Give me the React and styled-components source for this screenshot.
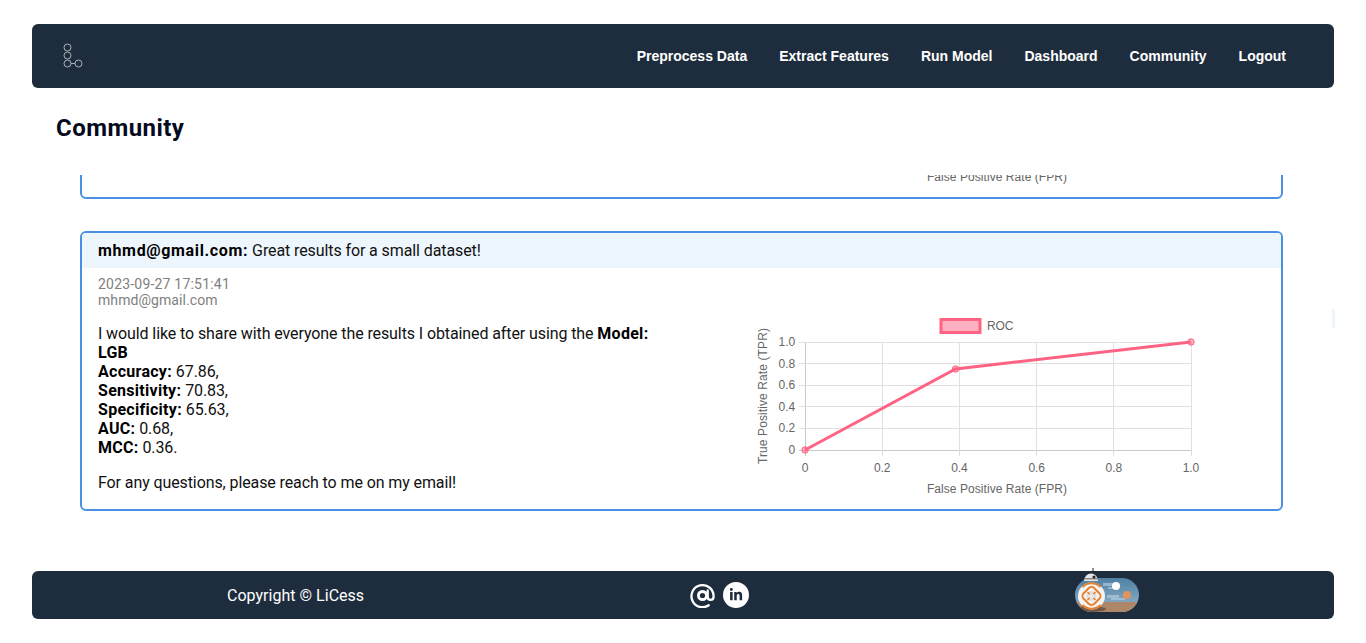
import React from "react"
import styled, { createGlobalStyle } from "styled-components"
import { FaLinkedinIn } from "react-icons/fa"

const GlobalStyle = createGlobalStyle`
  html, body {
    margin: 0;
    background: #fff;
    font-family: Roboto, "Liberation Sans", sans-serif;
  }
`

const Page = styled.div`
  box-sizing: border-box;
  height: 643px;
  padding: 24px 32px;
  display: flex;
  flex-direction: column;
  overflow: hidden;
`

const Header = styled.header`
  height: 64px;
  flex: none;
  background: #1e2d3d;
  border-radius: 6px;
  display: flex;
  align-items: center;
  justify-content: space-between;
  padding: 0 48px 0 28px;
`

const Nav = styled.nav`
  display: flex;
  gap: 32px;
`

const NavLink = styled.a`
  color: #fff;
  font-family: "Liberation Sans", Arial, sans-serif;
  font-weight: 700;
  font-size: 14px;
  text-decoration: none;
`

const Title = styled.h1`
  margin: 26px 0 0 24px;
  height: 61px;
  flex: none;
  font-size: 24px;
  line-height: 28px;
  font-weight: 700;
  letter-spacing: 0.45px;
  color: #050a1e;
`

const Feed = styled.main`
  margin-left: 48px;
  width: 1203px;
  height: 336px;
  flex: none;
  display: flex;
  flex-direction: column;
  justify-content: flex-end;
  gap: 32px;
  overflow: hidden;
`

const Card = styled.article`
  flex: none;
  border: 2px solid #4a90e2;
  border-radius: 6px;
  overflow: hidden;
`

const CardHead = styled.div`
  padding: 8px 16px;
  background: #eef6fd;
  font-size: 16px;
  letter-spacing: -0.1px;
  color: #111;
`

const CardBody = styled.div`
  padding: 8px 16px 9px;
  font-size: 16px;
  letter-spacing: -0.1px;
  color: #111;
`

const Strong = styled.b`
  letter-spacing: ${(p) => (p.$wide ? "0.65px" : "0.28px")};
  color: #000;
`

const Meta = styled.div`
  font-size: 14px;
  letter-spacing: 0.07px;
  color: #808080;
  margin-bottom: 16px;
`

const Stamp = styled.div`
  letter-spacing: 0.2px;
`

const Columns = styled.div`
  display: grid;
  grid-template-columns: 1fr 1fr;
`

const Para = styled.p`
  margin: 0 0 16px;
  &:last-child {
    margin-bottom: 0;
  }
`

const ChartBox = styled.svg`
  display: block;
  width: 584px;
  height: 190px;
  margin-top: -14px;
`

const Footer = styled.footer`
  height: 48px;
  flex: none;
  margin-top: 60px;
  background: #1e2d3d;
  border-radius: 6px;
  display: flex;
  align-items: center;
  justify-content: space-between;
  padding: 0 195px;
  color: #fff;
`

const Copyright = styled.span`
  font-size: 16px;
  font-weight: 400;
  letter-spacing: 0.02px;
`

const Contacts = styled.div`
  display: flex;
  align-items: center;
  gap: 8px;
`

const AtLink = styled.a`
  display: flex;
  color: #fff;
`

const LinkedinLink = styled.a`
  width: 26px;
  height: 26px;
  border-radius: 50%;
  background: #fff;
  color: #1e2d3d;
  font-size: 14px;
  display: flex;
  align-items: center;
  justify-content: center;
`

const ThemeToggle = styled.svg`
  width: 64px;
  height: 34px;
  overflow: visible;
`

const ScrollMark = styled.div`
  position: absolute;
  left: 1332px;
  top: 309px;
  width: 3px;
  height: 19px;
  background: #eef6fd;
`

const navItems = ["Preprocess Data", "Extract Features", "Run Model", "Dashboard", "Community", "Logout"]

const posts = [
  {
    id: 1,
    user: "mhmd@gmail.com",
    title: "Shared results",
    date: "2023-09-27 17:50:12",
    model: "LGB",
    accuracy: "67.86",
    sensitivity: "70.83",
    specificity: "65.63",
    auc: "0.68",
    mcc: "0.36",
  },
  {
    id: 2,
    user: "mhmd@gmail.com",
    title: "Great results for a small dataset!",
    date: "2023-09-27 17:51:41",
    model: "LGB",
    accuracy: "67.86",
    sensitivity: "70.83",
    specificity: "65.63",
    auc: "0.68",
    mcc: "0.36",
    note: "For any questions, please reach to me on my email!",
  },
]

const PLOT = { left: 124, right: 510, top: 32, bottom: 140 }
const px = (v) => PLOT.left + v * (PLOT.right - PLOT.left)
const py = (v) => PLOT.bottom - v * (PLOT.bottom - PLOT.top)
const rocPoints = [[0, 0], [0.39, 0.75], [1, 1]]
const ticks = [0, 0.2, 0.4, 0.6, 0.8, 1]
const tickLabel = (t) => (t === 1 ? "1.0" : String(t))

const RocChart = () => (
  <ChartBox viewBox="0 0 584 190">
    <g fontFamily="'Liberation Sans', Arial, sans-serif" fontSize="12" fill="#666">
      <rect x="260" y="9.5" width="39" height="13" fill="rgba(255,99,132,0.5)" stroke="#ff6384" strokeWidth="3" />
      <text x="306" y="20">ROC</text>
      {ticks.map((t) => (
        <g key={t}>
          <line x1={px(t)} x2={px(t)} y1={PLOT.top} y2={PLOT.bottom + 6} stroke={t === 0 ? "#c8c8c8" : "#e0e0e0"} shapeRendering="crispEdges" />
          <line x1={PLOT.left - 6} x2={PLOT.right} y1={py(t)} y2={py(t)} stroke={t === 0 ? "#c8c8c8" : "#e0e0e0"} shapeRendering="crispEdges" />
          <text x={px(t)} y={PLOT.bottom + 22} textAnchor="middle">{tickLabel(t)}</text>
          <text x={PLOT.left - 10} y={py(t) + 4} textAnchor="end">{tickLabel(t)}</text>
        </g>
      ))}
      <text x="316" y="183" textAnchor="middle" letterSpacing="0.06">False Positive Rate (FPR)</text>
      <text transform="translate(86 86) rotate(-90)" textAnchor="middle" letterSpacing="0.1">True Positive Rate (TPR)</text>
    </g>
    <polyline
      points={rocPoints.map(([x, y]) => `${px(x)},${py(y)}`).join(" ")}
      fill="none"
      stroke="#ff6384"
      strokeWidth="3"
    />
    {rocPoints.map(([x, y]) => (
      <circle key={x} cx={px(x)} cy={py(y)} r="3.2" fill="rgba(255,99,132,0.5)" stroke="#ff6384" />
    ))}
  </ChartBox>
)

const Post = ({ post }) => (
  <Card>
    <CardHead>
      <Strong $wide>{post.user}:</Strong> {post.title}
    </CardHead>
    <CardBody>
      <Meta>
        <Stamp>{post.date}</Stamp>
        {post.user}
      </Meta>
      <Columns>
        <div>
          <Para>
            I would like to share with everyone the results I obtained after using the <Strong>Model: {post.model}</Strong>
            <br />
            <Strong>Accuracy:</Strong> {post.accuracy},
            <br />
            <Strong>Sensitivity:</Strong> {post.sensitivity},
            <br />
            <Strong>Specificity:</Strong> {post.specificity},
            <br />
            <Strong>AUC:</Strong> {post.auc},
            <br />
            <Strong>MCC:</Strong> {post.mcc}.
          </Para>
          {post.note && <Para>{post.note}</Para>}
        </div>
        <RocChart />
      </Columns>
    </CardBody>
  </Card>
)

const Logo = () => (
  <svg width="24" height="28" viewBox="0 0 24 28" fill="none" stroke="#a8b0b8" strokeWidth="1">
    <circle cx="7.5" cy="5.5" r="3.5" />
    <circle cx="7.5" cy="13.5" r="3.5" />
    <circle cx="7.5" cy="21.5" r="3.5" />
    <circle cx="18.5" cy="21.5" r="3.5" />
    <line x1="11" y1="21.5" x2="15" y2="21.5" />
  </svg>
)

const AtIcon = () => (
  <svg width="25" height="25" viewBox="0 0 24 24" fill="none" stroke="currentColor" strokeLinecap="round">
    <path d="M18 21.4 A10.6 10.6 0 1 1 22.6 12 V13.4 a2.8 2.8 0 0 1 -5.6 0 V7.2" strokeWidth="2.2" />
    <circle cx="12" cy="12" r="3.9" strokeWidth="2.8" />
  </svg>
)

const Bb8Toggle = () => (
  <ThemeToggle viewBox="0 0 64 34">
    <defs>
      <linearGradient id="sky" x1="0" y1="0" x2="0" y2="1">
        <stop offset="0" stopColor="#4f80a4" />
        <stop offset="0.7" stopColor="#7fa6bf" />
      </linearGradient>
      <clipPath id="pill">
        <rect width="64" height="34" rx="17" />
      </clipPath>
    </defs>
    <g clipPath="url(#pill)">
      <rect width="64" height="34" fill="url(#sky)" />
      <rect y="24" width="64" height="10" fill="#ad8768" />
      <path d="M28 5h10v3H28zM33 9h6v2H33zM36 20h14v2H36zM32 17h12v3H32z" fill="#b9d2e2" opacity="0.6" />
      <ellipse cx="16" cy="31" rx="15" ry="3" fill="#6f5a48" />
    </g>
    <circle cx="41" cy="8" r="4" fill="#fff" />
    <circle cx="52" cy="17" r="4" fill="#e2935a" />
    <circle cx="16.5" cy="18" r="13.5" fill="#f4f4f4" />
    <g fill="none" stroke="#e8802e">
      <path d="M7.5 9 A12.7 12.7 0 0 1 25.5 9 M7.5 27 A12.7 12.7 0 0 0 25.5 27" strokeWidth="2" />
      <rect x="9" y="10.5" width="15" height="15" rx="4" strokeWidth="2" transform="rotate(45 16.5 18)" />
    </g>
    <circle cx="16.5" cy="18" r="5" fill="#dedede" />
    <path d="M12.5 14 l8 8 M20.5 14 l-8 8" stroke="#e8802e" strokeWidth="1.6" />
    <circle cx="16.5" cy="18" r="2.6" fill="#e6e6e6" />
    <path d="M9 3 A7 7.5 0 0 1 23 3Z" fill="#e6e6e6" />
    <path d="M9 0h14v1.5H9z" fill="#8a8a8a" />
    <circle cx="19" cy="-1" r="1.6" fill="#2b2b2b" />
    <line x1="18" y1="-10" x2="18" y2="-5" stroke="#222" />
  </ThemeToggle>
)

const App = () => (
  <Page>
    <GlobalStyle />
    <Header>
      <Logo />
      <Nav>
        {navItems.map((item) => (
          <NavLink key={item} href="#">{item}</NavLink>
        ))}
      </Nav>
    </Header>
    <Title>Community</Title>
    <Feed>
      {posts.map((post) => (
        <Post key={post.id} post={post} />
      ))}
    </Feed>
    <Footer>
      <Copyright>Copyright © LiCess</Copyright>
      <Contacts>
        <AtLink href="#"><AtIcon /></AtLink>
        <LinkedinLink href="#"><FaLinkedinIn /></LinkedinLink>
      </Contacts>
      <Bb8Toggle />
    </Footer>
    <ScrollMark />
  </Page>
)

export default App
